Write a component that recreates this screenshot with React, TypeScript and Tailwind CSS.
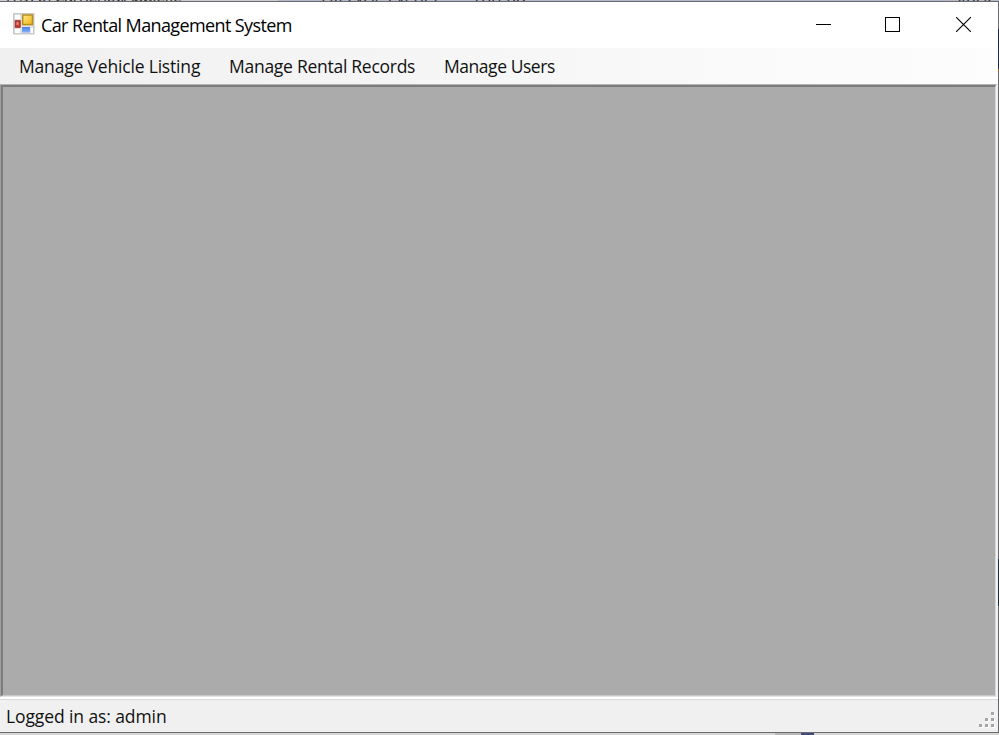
import type { ReactNode } from "react";

function FormIcon() {
  return (
    <svg width="22" height="22" viewBox="0 0 22 22" className="block shrink-0">
      <defs>
        <linearGradient id="gold" x1="0" y1="0" x2="1" y2="1">
          <stop offset="0" stopColor="#ffe994" />
          <stop offset="1" stopColor="#edb50c" />
        </linearGradient>
        <linearGradient id="blue" x1="0" y1="0" x2="0" y2="1">
          <stop offset="0" stopColor="#4d80dc" />
          <stop offset="1" stopColor="#83b2fa" />
        </linearGradient>
      </defs>
      <rect x="0.75" y="0.75" width="20" height="20" fill="#e2e2e4" stroke="#c9c9cb" strokeWidth="1.5" />
      <path d="M2 2h5v4H2zM2 16h5v4H2zM18 15h2v5h-2z" fill="#fff" />
      <rect x="2.2" y="7.7" width="5" height="6.6" fill="#c63a30" stroke="#a52c27" />
      <rect x="3.5" y="9" width="2" height="3" fill="#e08a80" />
      <rect x="9.7" y="2" width="9.8" height="9.6" fill="url(#gold)" stroke="#b98f1c" strokeWidth="1.5" />
      <rect x="9" y="14" width="8" height="5.5" fill="url(#blue)" />
    </svg>
  );
}

function MenuItem({ children, className }: { children: ReactNode; className: string }) {
  return (
    <button className={`h-9 shrink-0 whitespace-nowrap text-left leading-[35px] ${className}`}>
      {children}
    </button>
  );
}

export default function App() {
  return (
    <div className="flex h-[735px] w-[999px] flex-col overflow-hidden bg-[#c8c8c9] font-['Open_Sans','Noto_Sans',sans-serif] text-black">
      <div className="flex h-px shrink-0 overflow-hidden bg-[#b3b9cb] text-[17px] leading-[22px] text-[#333]">
        <div className="h-px w-[278px] shrink-0 overflow-hidden bg-[#cbccd0] pl-1.5">
          <div className="-mt-[15px] whitespace-nowrap tracking-[-0.9px]">[7376] CarRentalApp.exe</div>
        </div>
        <div className="h-px w-[178px] shrink-0 overflow-hidden pl-[43px]">
          <div className="-mt-[14px] whitespace-nowrap tracking-[-0.5px]">Lifecycle Events</div>
        </div>
        <div className="h-px w-[480px] shrink-0 overflow-hidden pl-4">
          <div className="-mt-[14px] tracking-[-0.4px]">Thread:</div>
        </div>
        <div className="h-px overflow-hidden pl-4">
          <div className="-mt-[14px] tracking-[-0.4px]">Stack</div>
        </div>
      </div>

      <div className="flex min-h-0 flex-1">
        <main className="flex w-[998px] shrink-0 flex-col border-y border-[#6b6b70] bg-[#f0f0f0]">
          <header className="flex h-[46px] shrink-0 items-start bg-white">
            <div className="pl-[13px] pt-[11px]">
              <FormIcon />
            </div>
            <h1 className="ml-[6px] w-[260px] whitespace-nowrap pt-[11px] text-[18px] leading-6 tracking-[-0.61px]">
              Car Rental Management System
            </h1>
            <div className="ml-auto flex text-black">
              <button aria-label="Minimize" className="flex h-[46px] w-[69px] items-start justify-center pt-[15px]">
                <svg width="15" height="15" shapeRendering="crispEdges">
                  <path d="M0 7.5h15" stroke="currentColor" />
                </svg>
              </button>
              <button aria-label="Maximize" className="flex h-[46px] w-[69px] items-start justify-center pt-[15px]">
                <svg width="15" height="15" shapeRendering="crispEdges">
                  <rect x="0.5" y="0.5" width="14" height="14" fill="none" stroke="currentColor" />
                </svg>
              </button>
              <button aria-label="Close" className="flex h-[46px] w-[71px] items-start pl-[29px] pt-[15px]">
                <svg width="15" height="15">
                  <path d="M0 0l15 15M15 0L0 15" stroke="currentColor" strokeWidth="1.1" />
                </svg>
              </button>
            </div>
          </header>

          <nav className="flex h-9 shrink-0 bg-gradient-to-r from-[#f0f0f0] to-[#fdfdfd] pl-[19px] text-[17.5px] text-[#111]">
            <MenuItem className="w-[210px] tracking-[-0.18px]">Manage Vehicle Listing</MenuItem>
            <MenuItem className="w-[215px] tracking-[-0.27px]">Manage Rental Records</MenuItem>
            <MenuItem className="w-[130px] tracking-[-0.45px]">Manage Users</MenuItem>
          </nav>

          <section className="mr-px flex h-[613px] shrink-0 border border-b-[#e4e4e4] border-l-[#a0a0a0] border-r-[#f0f0f0] border-t-[#b4b4b4]">
            <div className="flex-1 border-l-2 border-r border-t-2 border-b border-b-[#c8c8c8] border-l-[#7c7c7c] border-r-[#d8d8d8] border-t-[#7c7c7c] bg-[#ababab]" />
          </section>

          <footer className="flex min-h-0 flex-1 flex-col bg-[#f0f0f0]">
            <div className="h-0.5 shrink-0 bg-white" />
            <div className="h-px shrink-0 bg-[#dadada]" />
            <div className="flex flex-1 justify-between">
              <span className="pl-1.5 pt-[4px] text-[17.5px] leading-6 tracking-[-0.1px] text-[#111]">
                Logged in as: admin
              </span>
              <svg width="16" height="16" className="mr-[3px] mt-[12px]">
                {[[12, 0], [6, 6], [12, 6], [0, 12], [6, 12], [12, 12]].map(([x, y]) => (
                  <g key={`${x}-${y}`}>
                    <rect x={x + 1} y={y + 1} width="3" height="3" fill="#fff" />
                    <rect x={x} y={y} width="3" height="3" fill="#a5a5a5" />
                  </g>
                ))}
              </svg>
            </div>
          </footer>
        </main>
        <div className="flex w-px flex-col bg-[#68686e]">
          <div className="mt-7 h-10 bg-[#202b42]" />
          <div className="h-[3px] bg-[#88603c]" />
          <div className="mt-[487px] h-[47px] bg-[#202b3a]" />
        </div>
      </div>

      <div className="flex h-[2px] shrink-0 bg-[#d5d5d5]">
        <div className="ml-[775px] w-[26px] bg-[#b8b8b8]" />
        <div className="w-[13px] bg-[#404b78]" />
      </div>
    </div>
  );
}
